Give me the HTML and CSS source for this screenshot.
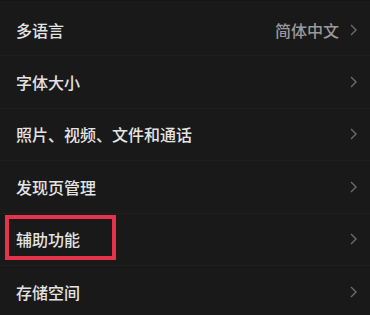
FILE: index.html
```html
<!DOCTYPE html>
<html lang="zh-CN">
  <head>
    <meta charset="UTF-8" />
    <meta name="viewport" content="width=device-width, initial-scale=1" />
    <title>设置</title>
    <link rel="stylesheet" href="styles.css">
  </head>
  <body>
    <ul class="settings">
      <li class="row">
        <span class="label">多语言</span>
        <span class="value">简体中文</span>
        <svg class="arrow" viewBox="0 0 7 12"><polyline points="1,1 6,6 1,11" /></svg>
      </li>
      <li class="row">
        <span class="label">字体大小</span>
        <svg class="arrow" viewBox="0 0 7 12"><polyline points="1,1 6,6 1,11" /></svg>
      </li>
      <li class="row">
        <span class="label">照片、视频、文件和通话</span>
        <svg class="arrow" viewBox="0 0 7 12"><polyline points="1,1 6,6 1,11" /></svg>
      </li>
      <li class="row">
        <span class="label">发现页管理</span>
        <svg class="arrow" viewBox="0 0 7 12"><polyline points="1,1 6,6 1,11" /></svg>
      </li>
      <li class="row">
        <span class="label marked">辅助功能</span>
        <svg class="arrow" viewBox="0 0 7 12"><polyline points="1,1 6,6 1,11" /></svg>
      </li>
      <li class="row">
        <span class="label">存储空间</span>
        <svg class="arrow" viewBox="0 0 7 12"><polyline points="1,1 6,6 1,11" /></svg>
      </li>
    </ul>
  </body>
</html>
```

FILE: styles.css
```css
body {
  margin: 0;
  padding: 0;
  background: #191919;
  font-family: "Noto Sans CJK SC", "Noto Sans", sans-serif;
  overflow: hidden;
}

.settings {
  list-style: none;
  margin: 0;
  padding: 3px 0 0;
  border-top: 1px solid #141414;
}

.row {
  display: flex;
  align-items: center;
  height: 52.4px;
  box-sizing: border-box;
  padding: 0 13px 0 16px;
  border-bottom: 1px solid #1f1f1f;
}

.label {
  flex: 1;
  font-size: 16px;
  font-weight: 500;
  color: #e4e4e4;
  position: relative;
}

.marked::after {
  content: "";
  position: absolute;
  left: -11px;
  top: -12px;
  width: 103px;
  height: 37px;
  border: 4px solid #e3344c;
}

.value {
  font-size: 16px;
  font-weight: 500;
  color: #9a9a9a;
  margin-right: 11px;
}

.arrow {
  width: 7px;
  height: 12px;
}

.arrow polyline {
  fill: none;
  stroke: #6c6c6c;
  stroke-width: 1.4;
}
```
